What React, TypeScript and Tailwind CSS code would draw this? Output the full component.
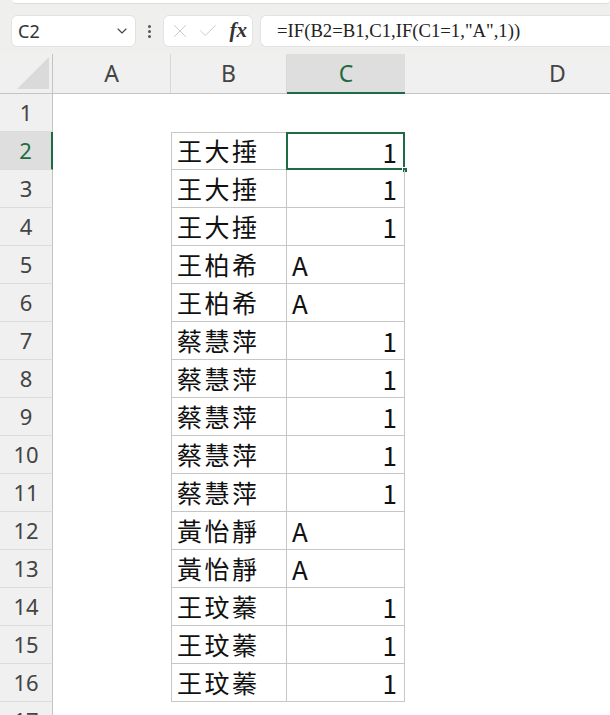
import { ChevronDown, X, Check } from "lucide-react";

const rows: { name: string; value: string }[] = [
  { name: "王大捶", value: "1" },
  { name: "王大捶", value: "1" },
  { name: "王大捶", value: "1" },
  { name: "王柏希", value: "A" },
  { name: "王柏希", value: "A" },
  { name: "蔡慧萍", value: "1" },
  { name: "蔡慧萍", value: "1" },
  { name: "蔡慧萍", value: "1" },
  { name: "蔡慧萍", value: "1" },
  { name: "蔡慧萍", value: "1" },
  { name: "黃怡靜", value: "A" },
  { name: "黃怡靜", value: "A" },
  { name: "王玟蓁", value: "1" },
  { name: "王玟蓁", value: "1" },
  { name: "王玟蓁", value: "1" },
];

const headFont = { fontFamily: '"Noto Sans", "Open Sans", sans-serif' };
const cellFont = { fontFamily: '"Noto Sans CJK TC", "Noto Sans", sans-serif' };

function RowHeader({ n, active }: { n: number; active?: boolean }) {
  return (
    <div
      className={`w-[53px] shrink-0 h-full flex items-center justify-center text-[22px] border-b border-[#dcdcdc] ${
        active
          ? "bg-[#dedede] text-[#1e6b41] border-r-2 border-r-[#1e6b41]"
          : "bg-[#f0f0f0] text-[#444] border-r border-r-[#c4c4c4]"
      }`}
      style={headFont}
    >
      {n}
    </div>
  );
}

export default function App() {
  return (
    <div className="w-[610px] h-[715px] overflow-hidden bg-white flex flex-col">
      {/* toolbar strip */}
      <div className="bg-[#efefed] h-[54px] shrink-0 flex flex-col">
        <div className="h-[4px] ml-[12px] bg-white rounded-b-md border-b border-[#dedede]" />
        <div className="flex items-center h-[32px] mt-[11px]">
          <div className="ml-[11px] w-[125px] h-[32px] bg-white rounded-md border border-[#e2e2e2] flex items-center justify-between pl-[6px] pr-[5px]">
            <span className="text-[18px] text-[#333]" style={headFont}>
              C2
            </span>
            <ChevronDown size={16} strokeWidth={1.6} className="text-[#444]" />
          </div>
          <div className="w-[27px] flex flex-col items-center gap-[2px]">
            <span className="w-[3px] h-[3px] bg-[#555] rounded-full" />
            <span className="w-[3px] h-[3px] bg-[#555] rounded-full" />
            <span className="w-[3px] h-[3px] bg-[#555] rounded-full" />
          </div>
          <div className="w-[90px] h-[32px] bg-white rounded-md border border-[#e2e2e2] flex items-center pl-[5px] pr-[5px]">
            <X size={22} strokeWidth={1} className="text-[#c6c6c6]" />
            <Check size={22} strokeWidth={1} className="text-[#c6c6c6] ml-[6px]" />
            <span
              className="ml-auto text-[21px] italic font-bold text-[#333]"
              style={{ fontFamily: '"Liberation Serif", serif' }}
            >
              fx
            </span>
          </div>
          <div className="ml-[7px] flex-1 h-[32px] bg-white rounded-l-md border border-r-0 border-[#e2e2e2] flex items-center pl-[16px]">
            <span className="text-[18.7px] text-[#222]" style={{ fontFamily: '"Liberation Serif", serif' }}>
              =IF(B2=B1,C1,IF(C1=1,"A",1))
            </span>
          </div>
        </div>
      </div>

      {/* column headers */}
      <div className="flex h-[40px] shrink-0 bg-[#f0f0f0] border-b border-[#c4c4c4]" style={headFont}>
        <div className="w-[53px] shrink-0 relative border-r border-[#c4c4c4]">
          <div className="absolute right-[3px] bottom-[4px] w-0 h-0 border-l-[32px] border-l-transparent border-b-[32px] border-b-[#dadada]" />
        </div>
        <div className="w-[118px] shrink-0 flex items-center justify-center text-[23px] text-[#444] border-r border-[#d8d8d8]">
          A
        </div>
        <div className="w-[116px] shrink-0 flex items-center justify-center text-[23px] text-[#444] border-r border-[#d8d8d8]">
          B
        </div>
        <div className="w-[118px] shrink-0 flex items-center justify-center text-[23px] text-[#1e6b41] bg-[#dedede] border-b-2 border-[#1e6b41] -mb-px">
          C
        </div>
        <div className="flex-1 flex items-center justify-center text-[23px] text-[#444]">
          <span className="ml-[100px]">D</span>
        </div>
      </div>

      {/* row 1 */}
      <div className="flex h-[38px] shrink-0">
        <RowHeader n={1} />
      </div>

      {rows.map((r, i) => {
        const first = i === 0;
        return (
          <div key={i} className="flex h-[38px] shrink-0">
            <RowHeader n={i + 2} active={first} />
            <div className="w-[118px] shrink-0" />
            <div
              className={`w-[116px] shrink-0 border-l border-r border-b border-[#c6c6c6] flex items-center pl-[5px] text-[25px] tracking-[2.5px] text-[#111] ${
                first ? "border-t" : ""
              }`}
              style={cellFont}
            >
              {r.name}
            </div>
            <div
              className={`w-[118px] shrink-0 relative border-r border-b border-[#c6c6c6] flex items-center text-[26px] text-[#111] ${
                first ? "border-t" : ""
              } ${r.value === "A" ? "justify-start pl-[5px]" : "justify-end pr-[7px]"}`}
              style={cellFont}
            >
              {r.value}
              {first && (
                <>
                  <div className="absolute -top-px -left-px -right-px -bottom-px border-2 border-[#1e6b41]" />
                  <div className="absolute -right-[4px] -bottom-[4px] w-[6px] h-[6px] bg-[#1e6b41] border border-white" />
                </>
              )}
            </div>
          </div>
        );
      })}

      {/* row 17 */}
      <div className="flex h-[38px] shrink-0">
        <RowHeader n={17} />
      </div>
    </div>
  );
}
